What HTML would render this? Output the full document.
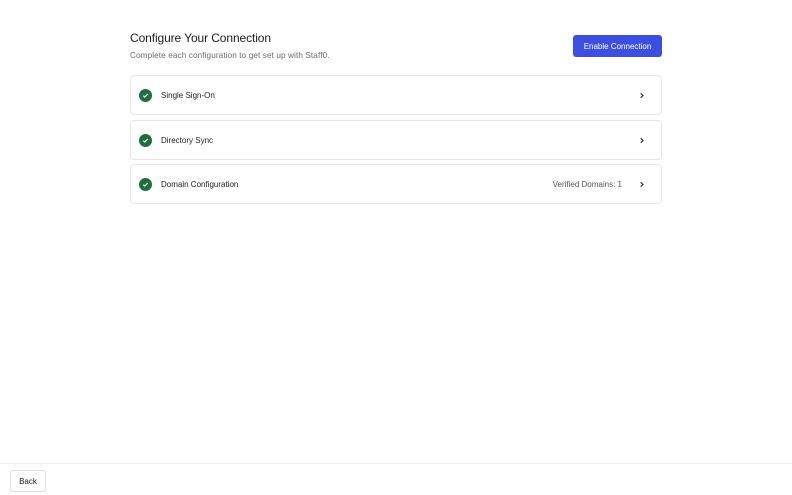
<!DOCTYPE html>
<html><head><style>
*{box-sizing:border-box;margin:0;padding:0}
body{width:792px;height:495px;background:#fff;font-family:"Liberation Sans",sans-serif;color:#1a1a1a;position:relative;overflow:hidden}
h1{position:absolute;left:130px;top:31px;font-size:12px;font-weight:500;color:#1c1c1c;letter-spacing:-0.1px}
.sub{position:absolute;left:130px;top:51px;font-size:8.2px;color:#6b6b6b;letter-spacing:0.1px}
.btn{position:absolute;left:573px;top:35px;width:89px;height:22px;background:#3c4fe0;border-radius:3px;color:#fff;font-size:8px;display:flex;align-items:center;justify-content:center}
.card{position:absolute;left:130px;width:532px;height:40px;border:1px solid #e6e6e6;border-radius:4px;display:flex;align-items:center;font-size:8px}
.chk{width:13px;height:13px;border-radius:50%;background:#1d6f3c;margin-left:8px;display:flex;align-items:center;justify-content:center}
.lbl{margin-left:9px;color:#1c1c1c}
.right{margin-left:auto;color:#555;margin-right:17px}
.arr{margin-right:16px}
.r0{margin-left:auto}
.foot{position:absolute;left:0;top:463px;width:792px;border-top:1px solid #eee}
.back{position:absolute;left:10px;top:470px;width:36px;height:22px;border:1px solid #ddd;border-radius:3px;font-size:8px;display:flex;align-items:center;justify-content:center}
</style></head><body>
<h1>Configure Your Connection</h1>
<div class="sub">Complete each configuration to get set up with Staff0.</div>
<div class="btn">Enable Connection</div>
<div class="card" style="top:75px"><div class="chk"><svg width="7" height="7" viewBox="0 0 8 8"><path d="M1.5 4.2L3.2 5.8L6.5 2.3" stroke="#fff" stroke-width="1.3" fill="none"/></svg></div><span class="lbl">Single Sign-On</span><span class="r0"></span><svg class="arr" width="6" height="7" viewBox="0 0 6 8"><path d="M1.5 1.5L4.2 4L1.5 6.5" stroke="#222" stroke-width="1.2" fill="none"/></svg></div>
<div class="card" style="top:120px"><div class="chk"><svg width="7" height="7" viewBox="0 0 8 8"><path d="M1.5 4.2L3.2 5.8L6.5 2.3" stroke="#fff" stroke-width="1.3" fill="none"/></svg></div><span class="lbl">Directory Sync</span><span class="r0"></span><svg class="arr" width="6" height="7" viewBox="0 0 6 8"><path d="M1.5 1.5L4.2 4L1.5 6.5" stroke="#222" stroke-width="1.2" fill="none"/></svg></div>
<div class="card" style="top:164px"><div class="chk"><svg width="7" height="7" viewBox="0 0 8 8"><path d="M1.5 4.2L3.2 5.8L6.5 2.3" stroke="#fff" stroke-width="1.3" fill="none"/></svg></div><span class="lbl">Domain Configuration</span><span class="right">Verified Domains: 1</span><svg class="arr" width="6" height="7" viewBox="0 0 6 8"><path d="M1.5 1.5L4.2 4L1.5 6.5" stroke="#222" stroke-width="1.2" fill="none"/></svg></div>
<div class="foot"></div>
<div class="back">Back</div>
</body></html>
